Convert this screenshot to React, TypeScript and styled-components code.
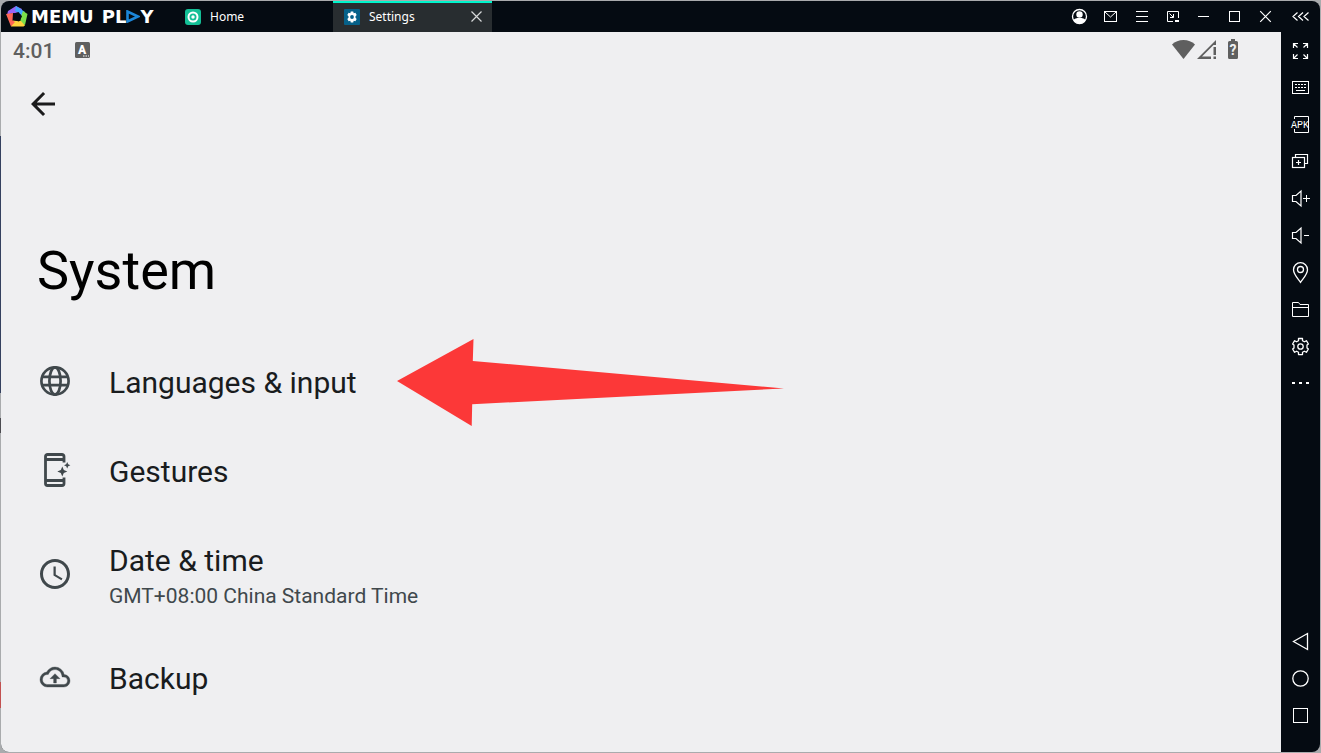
import React from "react";
import styled, { createGlobalStyle, css } from "styled-components";
import { MdAccessTime, MdArrowBack } from "react-icons/md";

const GlobalStyle = createGlobalStyle`
  *, *::before, *::after { box-sizing: border-box; }
  body { margin: 0; background: #c9cccb; }
  button { margin: 0; padding: 0; border: 0; background: none; color: inherit; font: inherit; cursor: pointer; }
`;

const Desktop = styled.div`
  min-height: 100vh;
  display: flex;
  padding: 1px;
  background:
    linear-gradient(
      #a9abad 0 136px, #34405f 136px 393px, #a9abad 393px 418px, #4b4b50 418px 433px,
      #a9abad 433px 682px, #c25150 682px 708px, #a9abad 708px
    ) left / 1px 100% no-repeat,
    #a9abad;
`;

const Window = styled.div`
  flex: 1;
  display: flex;
  flex-direction: column;
  overflow: hidden;
  border-radius: 8px;
  background: #050b12;
  color: #fff;
`;

const TitleBar = styled.header`
  display: flex;
  height: 31px;
  font: 12px/18px "Noto Sans", "Open Sans", sans-serif;
`;

const Brand = styled.div`
  display: flex;
  align-items: center;
  width: 173px;
  padding-left: 5px;
`;

const Wordmark = styled.div`
  display: flex;
  align-items: center;
  gap: 8px;
  margin-left: 3px;
  font: bold 18px/20px "DejaVu Sans", sans-serif;
`;

const WordmarkPart = styled.span`
  display: flex;
  align-items: center;
`;

const Tabs = styled.nav`
  display: flex;
  flex: 1;
`;

const Tab = styled.div<{ $active?: boolean }>`
  display: flex;
  align-items: center;
  justify-content: space-between;
  width: 159px;
  padding: 0 9px 0 11px;
  ${(p) =>
    p.$active &&
    css`
      background: #282d30;
      box-shadow: inset 0 2px #00f5cc;
    `}
`;

const TabButton = styled.button`
  display: flex;
  align-items: center;
  gap: 9px;
`;

const IconButton = styled.button<{ $width?: number; $height?: number }>`
  display: flex;
  align-items: center;
  justify-content: center;
  width: ${(p) => p.$width ?? 31}px;
  height: ${(p) => p.$height ?? 31}px;
`;

const Line = styled.svg`
  display: block;
  overflow: visible;
  fill: none;
  stroke: #fff;
  stroke-width: 1;
`;

const Body = styled.div`
  display: flex;
  flex: 1;
`;

const Screen = styled.main`
  flex: 1;
  background: #efeff1;
  color: #191c1e;
  font-family: Roboto, sans-serif;
`;

const StatusBar = styled.div`
  display: flex;
  align-items: center;
  height: 37px;
  padding: 0 42px 0 12px;
  color: #5f5f5f;
  font-size: 21px;
  font-weight: 500;
  line-height: 24px;
`;

const StatusIcons = styled.div`
  display: flex;
  align-items: center;
  margin-left: auto;
`;

const KeyboardBadge = styled.svg`
  margin-left: 21px;
`;

const BackButton = styled.button`
  display: flex;
  margin: 17px 0 0 24px;
  color: #1b1b1c;
`;

const Title = styled.h1`
  margin: 117px 0 34px;
  padding-left: 36px;
  color: #000;
  font-size: 54px;
  font-weight: 400;
  line-height: 64px;
`;

const List = styled.ul`
  margin: 0;
  padding: 0;
  list-style: none;
`;

const Row = styled.li`
  display: flex;
  align-items: center;
`;

const RowButton = styled.button<{ $tall?: boolean }>`
  display: flex;
  align-items: center;
  gap: 36px;
  height: ${(p) => (p.$tall ? 118 : 89)}px;
  padding-left: 36px;
  text-align: left;

  > svg {
    color: #40484c;
  }
`;

const RowText = styled.span<{ $tall?: boolean }>`
  display: flex;
  flex-direction: column;
  padding-top: ${(p) => (p.$tall ? 7 : 3)}px;
`;

const RowLabel = styled.span`
  font-size: 30px;
  line-height: 36px;
`;

const RowNote = styled.span`
  color: #40484c;
  font-size: 21px;
  line-height: 34px;
`;

const Pointer = styled.svg`
  display: block;
  margin-left: 40px;
`;

const Sidebar = styled.aside`
  display: flex;
  flex-direction: column;
  justify-content: space-between;
  width: 39px;
  padding-bottom: 18px;
`;

function Glyph({ crisp, children }: { crisp?: boolean; children: React.ReactNode }) {
  return (
    <Line width="19" height="19" viewBox="0 0 19 19" shapeRendering={crisp ? "crispEdges" : "auto"} aria-hidden="true">
      {children}
    </Line>
  );
}

const gearPath =
  "M7.5 1.5h4v2.2l1.9 1.1 2-1.1 2 3.3-1.4 1.1v2.8l1.4 1.1-2 3.3-2-1.1-1.9 1.1v2.3h-4v-2.3l-1.9-1.1-2 1.1-2-3.3L3 10.9V8.1L1.6 7l2-3.3 2 1.1 1.9-1.1z";

const controls = [
  {
    label: "Account",
    icon: (
      <Glyph>
        <circle cx="9.5" cy="9.5" r="7" strokeWidth="1.3" />
        <circle cx="9.5" cy="7.5" r="3.2" fill="#fff" stroke="none" />
        <path d="M3.5 13.3c1-2 2.8-2.3 6-2.3s5 .3 6 2.3c-1.2 2-3.4 3.2-6 3.2s-4.8-1.2-6-3.2z" fill="#fff" stroke="none" />
      </Glyph>
    ),
  },
  {
    label: "Messages",
    icon: (
      <Glyph>
        <rect x="3.5" y="4.5" width="12" height="10" />
        <path d="M4 5l5.5 5L15 5" />
      </Glyph>
    ),
  },
  { label: "Menu", icon: <Glyph crisp><path d="M4 4.5h12M4 9.5h12M4 14.5h12" /></Glyph> },
  {
    label: "Mini window",
    icon: (
      <Glyph>
        <path d="M10 14.5H4.5v-10h11V11" />
        <path d="M6.5 6.5l4 4M10.5 7v3.5H7" />
        <path d="M12 13h4v2h-4z" fill="#fff" stroke="none" />
      </Glyph>
    ),
  },
  { label: "Minimize", icon: <Glyph crisp><path d="M4 9.5h11" /></Glyph> },
  { label: "Maximize", icon: <Glyph><rect x="4.5" y="4.5" width="10" height="10" /></Glyph> },
  { label: "Close", icon: <Glyph><path d="M4.2 4.2l10.6 10.6M14.8 4.2L4.2 14.8" strokeWidth="1.2" /></Glyph> },
];

const speaker = "M1.5 6.5h3.5l5-4.5v15l-5-4.5H1.5z";

const tools = [
  {
    label: "Full screen",
    icon: (
      <Glyph>
        <path
          strokeWidth="1.2"
          d="M2.5 7V2.5H7M2.5 2.5l4 4M12 2.5h4.5V7M16.5 2.5l-4 4M2.5 13v4.5H7M2.5 17.5l4-4M12 17.5h4.5V13M16.5 17.5l-4-4"
        />
      </Glyph>
    ),
  },
  {
    label: "Key mapping",
    icon: (
      <Glyph crisp>
        <rect x="1.5" y="3.5" width="16" height="12" />
        <path d="M4 6.5h12M4 9.5h12" strokeDasharray="2 1" />
        <path d="M5 12.5h9" />
      </Glyph>
    ),
  },
  {
    label: "Install APK",
    icon: (
      <Glyph>
        <path d="M3.5 4V1.5h14v16h-14V14" />
        <text x="0" y="13" fill="#fff" stroke="none" fontFamily="Liberation Mono, monospace" fontSize="10">
          APK
        </text>
      </Glyph>
    ),
  },
  {
    label: "Multiple instances",
    icon: (
      <Glyph>
        <rect x="1.5" y="5.5" width="12" height="10" strokeWidth="1.2" />
        <path d="M4.5 5V2.5h12v9H14M7.5 8v5M5 10.5h5" strokeWidth="1.2" />
      </Glyph>
    ),
  },
  { label: "Volume up", icon: <Glyph><path d={speaker} strokeWidth="1.2" /><path d="M12 9.5h7M15.5 6v7" /></Glyph> },
  { label: "Volume down", icon: <Glyph><path d={speaker} strokeWidth="1.2" /><path d="M13 9.5h5" /></Glyph> },
  {
    label: "Location",
    icon: (
      <Glyph>
        <path d="M9.5 19.3C6 14.5 2.5 11 2.5 6.7a7 7 0 0 1 14 0c0 4.3-3.5 7.8-7 12.6z" strokeWidth="1.3" />
        <circle cx="9.5" cy="6.5" r="3" strokeWidth="1.3" />
      </Glyph>
    ),
  },
  { label: "Shared folder", icon: <Glyph><path d="M1.5 16.5v-14h6l1.5 2h8.5v12zM1.5 7.5h16" /></Glyph> },
  {
    label: "Settings",
    icon: (
      <Glyph>
        <path d={gearPath} strokeWidth="1.3" strokeLinejoin="round" />
        <circle cx="9.5" cy="9.5" r="2.7" strokeWidth="1.3" />
      </Glyph>
    ),
  },
  { label: "More", icon: <Glyph crisp><path d="M1 9h3M8 9h3M15 9h3" strokeWidth="2" /></Glyph> },
];

const navigation = [
  { label: "Back", icon: <Glyph><path d="M16.5 1.5v16l-14-8z" strokeWidth="1.3" /></Glyph> },
  { label: "Home", icon: <Glyph><circle cx="9.5" cy="9.5" r="7.7" strokeWidth="1.3" /></Glyph> },
  { label: "Recent apps", icon: <Glyph><rect x="2.5" y="2.5" width="14" height="14" /></Glyph> },
];

function GlobeIcon() {
  return (
    <svg width="36" height="36" viewBox="0 0 36 36" fill="none" stroke="currentColor" strokeWidth="2.7" aria-hidden="true">
      <circle cx="18" cy="17" r="13.6" />
      <ellipse cx="18" cy="17" rx="5.6" ry="13.6" />
      <path d="M5 12.800h26M5 21.200h26" />
    </svg>
  );
}

function GesturesIcon() {
  return (
    <svg width="36" height="36" viewBox="0 1 36 36" fill="none" aria-hidden="true">
      <path
        d="M27 10.5V4.5a2 2 0 0 0-2-2H10.5a2 2 0 0 0-2 2v27a2 2 0 0 0 2 2H25a2 2 0 0 0 2-2v-6"
        stroke="currentColor"
        strokeWidth="2.8"
      />
      <path d="M8 7.5h19M8 28.5h19" stroke="currentColor" strokeWidth="3" />
      <path
        d="M25.3 14.5l1.5 3.5 3.5 1.5-3.5 1.5-1.5 3.5-1.5-3.5-3.5-1.5 3.5-1.5zM30.2 10l1 2.2 2.2 1-2.2 1-1 2.2-1-2.2-2.2-1 2.2-1z"
        fill="currentColor"
      />
    </svg>
  );
}

function CloudIcon() {
  return (
    <svg width="36" height="36" viewBox="-2.400 -1.600 28.800 28.800" fill="currentColor" stroke="currentColor" strokeWidth="0.3" aria-hidden="true">
      <path d="M19.35 10.04A7.49 7.49 0 0 0 12 4C9.11 4 6.6 5.64 5.35 8.04A5.994 5.994 0 0 0 0 14c0 3.31 2.69 6 6 6h13c2.76 0 5-2.24 5-5 0-2.64-2.05-4.78-4.65-4.96zM19 18H6c-2.21 0-4-1.79-4-4 0-2.05 1.53-3.76 3.56-3.97l1.07-.11.5-.95A5.469 5.469 0 0 1 12 6c2.62 0 4.88 1.86 5.39 4.43l.3 1.5 1.53.11A2.98 2.98 0 0 1 22 15c0 1.65-1.35 3-3 3z" />
      <path d="M8 13.300h2.900v3.500h2.200v-3.500H16l-4-4z" />
    </svg>
  );
}

const items = [
  { label: "Languages & input", icon: <GlobeIcon />, highlighted: true },
  { label: "Gestures", icon: <GesturesIcon /> },
  { label: "Date & time", note: "GMT+08:00 China Standard Time", icon: <MdAccessTime size={36} /> },
  { label: "Backup", icon: <CloudIcon /> },
];

function BrandMark() {
  return (
    <svg width="22" height="22" viewBox="0 0 22 22" aria-hidden="true">
      <path d="M10 0l6 3-1 5-8-1-6 2 1-4z" fill="#9a63f5" />
      <path d="M10 0l9 6-2 5-4-4-4-2z" fill="#42a5ff" />
      <path d="M17 5l4.5 3-2.5 11-5-2 1.5-8z" fill="#7be04a" />
      <path d="M19 19.5l-1.5 1H5l2-6 8 .5z" fill="#ffd33d" />
      <path d="M0 8l7-1-.5 7.5L9 16l-4 4.5z" fill="#ff6655" />
      <path d="M7.5 7.5l5-1.5 3.5 4.5-3 5-6-1.5z" fill="#050b12" />
    </svg>
  );
}

export default function App() {
  return (
    <>
      <GlobalStyle />
      <Desktop>
        <Window>
          <TitleBar>
            <Brand>
              <BrandMark />
              <Wordmark>
                <span>MEMU</span>
                <WordmarkPart>
                  <span>PL</span>
                  <svg width="14" height="13" viewBox="0 0 14 13" aria-label="A">
                    <path d="M1.5 1.5v10l10.5-5z" fill="none" stroke="#1c86d8" strokeWidth="2.6" />
                  </svg>
                  <span>Y</span>
                </WordmarkPart>
              </Wordmark>
            </Brand>
            <Tabs>
              <Tab>
                <TabButton>
                  <svg width="16" height="16" viewBox="0 0 16 16" aria-hidden="true">
                    <rect width="16" height="16" rx="3" fill="#14bf96" />
                    <circle cx="8" cy="8" r="4.5" fill="none" stroke="#fff" strokeWidth="2" />
                    <circle cx="8" cy="8" r="1.7" fill="#fff" />
                  </svg>
                  Home
                </TabButton>
              </Tab>
              <Tab $active>
                <TabButton>
                  <svg width="16" height="16" viewBox="0 0 16 16" aria-hidden="true">
                    <rect width="16" height="16" rx="1" fill="#066189" />
                    <path
                      d="M6.8 2.5h2.4l.5 1.7 1.7-.4 1.3 2.2L11.5 7.3v1.4l1.2 1.3-1.3 2.2-1.7-.4-.5 1.7H6.8l-.5-1.7-1.7.4L3.3 10l1.2-1.3V7.3L3.3 6l1.3-2.2 1.7.4z"
                      fill="#fff"
                    />
                    <circle cx="8" cy="8" r="1.9" fill="#066189" />
                  </svg>
                  Settings
                </TabButton>
                <IconButton $width={13} aria-label="Close tab">
                  <svg width="11" height="11" viewBox="0 0 11 11" aria-hidden="true">
                    <path d="M.5.5l10 10M10.5.5l-10 10" stroke="#d6d8d9" strokeWidth="1.2" />
                  </svg>
                </IconButton>
              </Tab>
            </Tabs>
            {controls.map((c) => (
              <IconButton key={c.label} aria-label={c.label}>
                {c.icon}
              </IconButton>
            ))}
            <IconButton $width={39} aria-label="Collapse sidebar">
              <Glyph>
                <path d="M6.5 5.5l-4.5 4 4.5 4M12 5.5l-4.5 4 4.5 4M17.5 5.5l-4.5 4 4.5 4" strokeWidth="1.2" />
              </Glyph>
            </IconButton>
          </TitleBar>
          <Body>
            <Screen>
              <StatusBar>
                <span>4:01</span>
                <KeyboardBadge width="15" height="18" viewBox="0 0 15 18" aria-hidden="true">
                  <rect width="15" height="16" rx="1.5" fill="#5f5f5f" />
                  <text x="3" y="12" fill="#fff" fontFamily="Roboto, sans-serif" fontSize="12" fontWeight="900">
                    A
                  </text>
                  <path d="M8 14h1.5M10.5 14H12M13 14h1" stroke="#fff" />
                </KeyboardBadge>
                <StatusIcons>
                  <svg width="67" height="24" viewBox="0 0 67 24" fill="#5f5f5f" aria-label="Wi-Fi, no signal, battery unknown">
                    <path d="M0 5.5C3 2.5 7 1 11.5 1S20 2.5 23 5.5L11.5 20z" />
                    <path d="M44 1v5h-2.5L30 17.5h9V20H25zM41.5 8H44v8h-2.5zM41.5 17.5H44V20h-2.5z" />
                    <path d="M59 0h4v2h1.5A1.5 1.5 0 0 1 66 3.5v15a1.5 1.5 0 0 1-1.5 1.5h-7a1.5 1.5 0 0 1-1.5-1.5v-15A1.5 1.5 0 0 1 57.5 2H59z" />
                    <text x="57.5" y="16" fill="#efeff1" fontFamily="Roboto, sans-serif" fontSize="14" fontWeight="700">
                      ?
                    </text>
                  </svg>
                </StatusIcons>
              </StatusBar>
              <BackButton aria-label="Navigate up">
                <MdArrowBack size={36} />
              </BackButton>
              <Title>System</Title>
              <List>
                {items.map((item) => (
                  <Row key={item.label}>
                    <RowButton $tall={Boolean(item.note)}>
                      {item.icon}
                      <RowText $tall={Boolean(item.note)}>
                        <RowLabel>{item.label}</RowLabel>
                        {item.note && <RowNote>{item.note}</RowNote>}
                      </RowText>
                    </RowButton>
                    {item.highlighted && (
                      <Pointer width="388" height="89" viewBox="0 -2 388 89" aria-hidden="true">
                        <path d="M0 42L76.5 0l-.7 22L387 49.5 75.2 65.2 74.7 87z" fill="#fc3838" />
                      </Pointer>
                    )}
                  </Row>
                ))}
              </List>
            </Screen>
            <Sidebar>
              <div>
                {tools.map((t) => (
                  <IconButton key={t.label} $width={39} $height={37} aria-label={t.label}>
                    {t.icon}
                  </IconButton>
                ))}
              </div>
              <div>
                {navigation.map((n) => (
                  <IconButton key={n.label} $width={39} $height={37} aria-label={n.label}>
                    {n.icon}
                  </IconButton>
                ))}
              </div>
            </Sidebar>
          </Body>
        </Window>
      </Desktop>
    </>
  );
}
